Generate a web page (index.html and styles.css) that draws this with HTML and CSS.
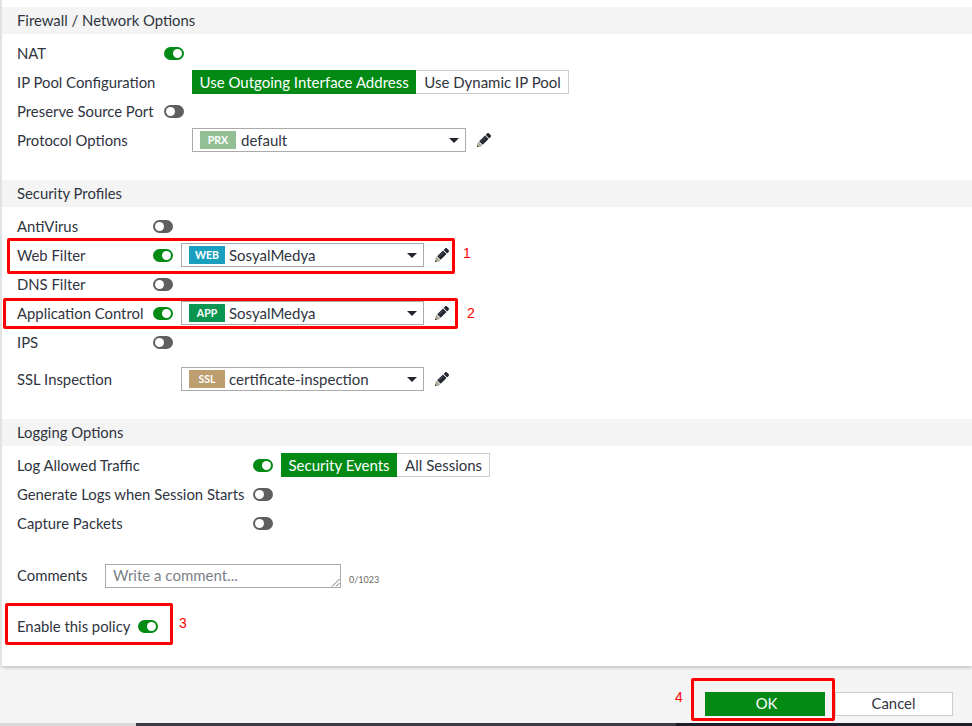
FILE: index.html
```html
<!DOCTYPE html>
<html lang="en">
<head>
<meta charset="utf-8">
<title>Firewall Policy</title>
<link rel="stylesheet" href="styles.css">
</head>
<body>
<svg class="sprite" width="0" height="0" aria-hidden="true">
  <symbol id="pencil" viewBox="0 0 512 512">
    <path d="M497.9 142.1l-46.1 46.1c-4.7 4.7-12.3 4.7-17 0l-111-111c-4.7-4.7-4.7-12.3 0-17l46.1-46.1c18.7-18.7 49.1-18.7 67.9 0l60.1 60.1c18.8 18.7 18.8 49.1 0 67.9z" fill="#22262e"/>
    <path d="M284.2 99.8L80 304l128 128 204.3-204.8c4.7-4.7 4.7-12.3 0-17l-111-111c-4.8-4.7-12.4-4.7-17.1 0z" fill="#22262e"/>
    <path d="M130 330L300 160" stroke="#6b6f78" stroke-width="26" fill="none"/>
    <path d="M60 324L21.6 362.4.4 483.9c-2.9 16.4 11.4 30.6 27.8 27.8l121.5-21.3L188 452z" fill="#b0a998"/>
    <path d="M9 446L2 484c-2 16 10 28 26 26l38-7z" fill="#22262e"/>
  </symbol>
</svg>
<main class="panel">
  <h2 class="section-title section-first">Firewall / Network Options</h2>
  <div class="rows rows-nat">
    <span class="label">NAT</span><span class="toggle on"></span><span></span>
    <span class="label">IP Pool Configuration</span><span></span>
    <div class="seg"><span class="seg-item active">Use Outgoing Interface Address</span><span class="seg-item">Use Dynamic IP Pool</span></div>
    <span class="label">Preserve Source Port</span><span class="toggle"></span><span></span>
    <span class="label">Protocol Options</span><span></span>
    <div class="picker">
      <div class="select select-wide"><span class="badge badge-prx">PRX</span><span class="value value-short">default</span><span class="caret"></span></div>
      <svg class="pencil"><use href="#pencil"/></svg>
    </div>
  </div>

  <h2 class="section-title">Security Profiles</h2>
  <div class="rows rows-sec">
    <span class="label">AntiVirus</span><span class="toggle"></span><span></span>
    <span class="label">Web Filter</span><span class="toggle on"></span>
    <div class="picker">
      <div class="select"><span class="badge badge-web">WEB</span><span class="value">SosyalMedya</span><span class="caret"></span></div>
      <svg class="pencil"><use href="#pencil"/></svg>
    </div>
    <span class="label">DNS Filter</span><span class="toggle"></span><span></span>
    <span class="label">Application Control</span><span class="toggle on"></span>
    <div class="picker">
      <div class="select"><span class="badge badge-app">APP</span><span class="value">SosyalMedya</span><span class="caret"></span></div>
      <svg class="pencil"><use href="#pencil"/></svg>
    </div>
    <span class="label">IPS</span><span class="toggle"></span><span></span>
    <span class="label spaced">SSL Inspection</span><span class="spaced"></span>
    <div class="picker spaced">
      <div class="select"><span class="badge badge-ssl">SSL</span><span class="value">certificate-inspection</span><span class="caret"></span></div>
      <svg class="pencil"><use href="#pencil"/></svg>
    </div>
  </div>

  <h2 class="section-title">Logging Options</h2>
  <div class="rows rows-log">
    <span class="label">Log Allowed Traffic</span><span class="toggle on"></span>
    <div class="seg"><span class="seg-item active">Security Events</span><span class="seg-item">All Sessions</span></div>
    <span class="label">Generate Logs when Session Starts</span><span class="toggle"></span><span></span>
    <span class="label">Capture Packets</span><span class="toggle"></span><span></span>
  </div>

  <div class="comments">
    <span class="label comments-label">Comments</span>
    <div class="textarea"><span class="placeholder">Write a comment...</span>
      <svg class="grip" viewBox="0 0 9 9"><path d="M1 8.5L8.5 1M5 8.5L8.5 5" stroke="#777" fill="none"/></svg>
    </div>
    <span class="counter">0/1023</span>
  </div>
  <div class="enable">
    <span class="label">Enable this policy</span><span class="toggle on"></span>
  </div>

  <div class="mark mark-web"></div><span class="note note-1">1</span>
  <div class="mark mark-app"></div><span class="note note-2">2</span>
  <div class="mark mark-enable"></div><span class="note note-3">3</span>
</main>
<footer class="footer">
  <div class="actions">
    <button class="btn btn-primary">OK</button>
    <button class="btn">Cancel</button>
  </div>
  <div class="mark mark-ok"></div><span class="note note-4">4</span>
  <div class="strip"><span class="strip-a"></span><span class="strip-b"></span><span class="strip-c"></span></div>
</footer>
</body>
</html>
```
FILE: styles.css
```css
* { box-sizing: border-box; }
html, body { margin: 0; height: 726px; overflow: hidden; }
body {
  width: 972px;
  display: flex;
  flex-direction: column;
  background: #f4f4f4;
  color: #2f3440;
  font: 14.85px/19px Lato, sans-serif;
  position: relative;
}
.sprite { position: absolute; }
.panel {
  height: 666px;
  background: #fff;
  margin-left: 2px;
  padding-top: 7px;
  box-shadow: -2px 0 0 #e2e2e2, 0 1px 4px rgba(0,0,0,.28);
  position: relative;
  z-index: 1;
  flex: none;
}
.section-title {
  margin: 25px 0 0;
  height: 27px;
  padding-left: 15px;
  background: #f4f4f4;
  font: 400 14.85px/26px Lato, sans-serif;
}
.section-first { margin-top: 0; }
.rows {
  display: grid;
  grid-auto-rows: 29px;
  align-items: center;
  padding: 5px 0 0 15px;
}
.rows-nat { grid-template-columns: 147px 28px 1fr; }
.rows-sec { grid-template-columns: 136px 28px 1fr; grid-template-rows: repeat(5, 29px) 37px; }
.rows-log { grid-template-columns: 236px 28px 1fr; }
.label { white-space: nowrap; padding-bottom: 1px; }
.spaced { margin-top: 8px; }
.toggle {
  display: block;
  width: 20px;
  height: 13px;
  border-radius: 7px;
  background: #5f5f5f;
  position: relative;
}
.toggle::after {
  content: "";
  position: absolute;
  left: 2px;
  top: 2px;
  width: 9px;
  height: 9px;
  border-radius: 50%;
  background: #fff;
}
.toggle.on { background: #028a14; }
.toggle.on::after { left: 9px; }
.seg { display: flex; height: 24px; margin-bottom: 1px; font-size: 15px; }
.seg-item {
  padding: 0 7px 0 8px;
  line-height: 22px;
  border: 1px solid #ccc;
  border-left: 0;
  white-space: nowrap;
}
.seg-item.active {
  padding: 0 6.5px;
  background: #028a14;
  color: #fff;
  border: 1px solid #028a14;
}
.picker { display: flex; align-items: center; gap: 11px; margin-bottom: 1px; }
.select {
  width: 243px;
  height: 24px;
  border: 1px solid #aaa;
  display: flex;
  align-items: center;
  padding-left: 7px;
  position: relative;
}
.select-wide { width: 274px; }
.badge {
  width: 36px;
  height: 18px;
  color: #fff;
  font: 700 10.5px/18px Lato, sans-serif;
  text-align: center;
}
.badge-prx { background: #93bf95; }
.badge-web { background: #1a9fbe; }
.badge-app { background: #0a9650; }
.badge-ssl { background: #bc9e6f; }
.value { margin-left: 4px; font-size: 15px; }
.value-short { margin-left: 5px; }
.caret {
  position: absolute;
  right: 6px;
  top: 9px;
  border-left: 5px solid transparent;
  border-right: 5px solid transparent;
  border-top: 5px solid #23262d;
}
.pencil { width: 14px; height: 14px; }
.comments {
  display: flex;
  align-items: center;
  margin: 23px 0 0 15px;
  height: 29px;
}
.comments-label { width: 88px; }
.textarea {
  width: 236px;
  height: 24px;
  border: 1px solid #aaa;
  padding-left: 7px;
  line-height: 20px;
  position: relative;
  font-size: 15px;
}
.placeholder { color: #7b7f87; }
.grip { position: absolute; right: 0; bottom: 0; width: 9px; height: 9px; }
.counter {
  margin: 8px 0 0 8px;
  font-size: 9px;
  line-height: 12px;
  color: #666;
}
.enable {
  display: flex;
  align-items: center;
  gap: 9px;
  margin: 22px 0 0 15px;
  height: 29px;
}
.enable .label { width: 112px; }
.footer { flex: 1; position: relative; }
.actions {
  display: flex;
  justify-content: flex-end;
  gap: 10px;
  padding: 26px 19px 0 0;
}
.btn {
  width: 118px;
  height: 24px;
  padding: 0 1px 1px 0;
  border: 1px solid #ccc;
  background: #fff;
  color: #2f3440;
  font: 14.85px/21px Lato, sans-serif;
}
.btn-primary {
  width: 120px;
  padding: 0 0 1px 3px;
  background: #028a14;
  border-color: #028a14;
  color: #fff;
}
.strip {
  position: absolute;
  left: 0;
  right: 0;
  bottom: 0;
  height: 3px;
  display: flex;
}
.strip-a { width: 136px; background: #d9d9d9; }
.strip-b { width: 540px; background: #3a3a48; }
.strip-c { flex: 1; background: #1c1c2a; }
.mark { position: absolute; border: 3px solid #f00; border-radius: 2px; }
.mark-web { left: 5px; top: 238px; width: 448px; height: 36px; }
.mark-app { left: 1px; top: 298px; width: 455px; height: 31px; }
.mark-enable { left: 3px; top: 603px; width: 168px; height: 42px; }
.mark-ok { left: 691px; top: 12px; width: 144px; height: 43px; }
.note { position: absolute; color: #f00; font: 14px/16px "Liberation Sans", sans-serif; }
.note-1 { left: 461px; top: 245px; }
.note-2 { left: 465px; top: 305px; }
.note-3 { left: 177px; top: 615px; }
.note-4 { left: 675px; top: 23px; }
```
